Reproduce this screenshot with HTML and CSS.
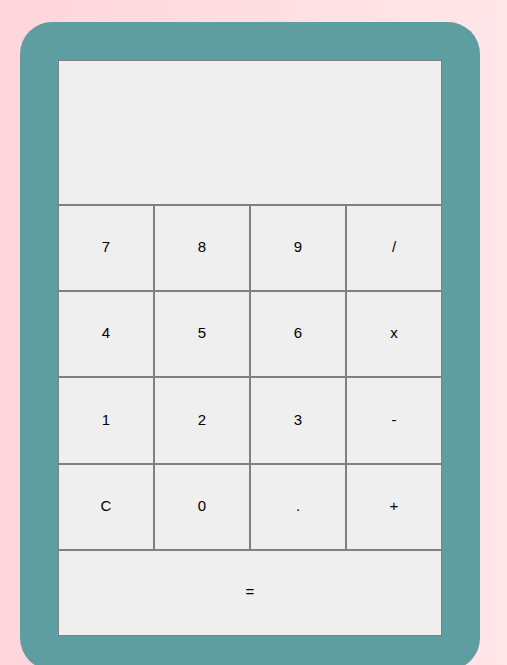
FILE: index.html
```html
<!DOCTYPE html>
<html>
<head>
<meta charset="utf-8">
<link rel="stylesheet" href="styles.css">
</head>
<body>
<div class="calculator">
  <div class="display"></div>
  <div class="keys">
    <button class="key">7</button>
    <button class="key">8</button>
    <button class="key">9</button>
    <button class="key">/</button>
    <button class="key">4</button>
    <button class="key">5</button>
    <button class="key">6</button>
    <button class="key">x</button>
    <button class="key">1</button>
    <button class="key">2</button>
    <button class="key">3</button>
    <button class="key">-</button>
    <button class="key">C</button>
    <button class="key">0</button>
    <button class="key">.</button>
    <button class="key">+</button>
    <button class="key key-wide">=</button>
  </div>
</div>
</body>
</html>
```
FILE: styles.css
```css
html, body {
  margin: 0;
  padding: 0;
  height: 100%;
  overflow: hidden;
}
body {
  background: linear-gradient(to right, #ffd6dc, #ffe6e9);
  font-family: "Liberation Sans", Arial, sans-serif;
  padding: 22px 0 0 20px;
  box-sizing: border-box;
}
.calculator {
  width: 460px;
  box-sizing: border-box;
  padding: 38px 38px 34px;
  background: #5f9ea0;
  border-radius: 32px;
}
.display {
  height: 145px;
  box-sizing: border-box;
  border: 1px solid #808080;
  background: #efefef;
}
.keys {
  display: grid;
  grid-template-columns: repeat(4, 96px);
  grid-template-rows: 86px 86px 87px 86px 86px;
}
.key {
  margin: 0;
  padding: 0 0 3px;
  border: 1px solid #808080;
  background: #efefef;
  color: #000;
  font-family: "Liberation Sans", Arial, sans-serif;
  font-size: 15px;
}
.key-wide {
  grid-column: 1 / 5;
}
```
